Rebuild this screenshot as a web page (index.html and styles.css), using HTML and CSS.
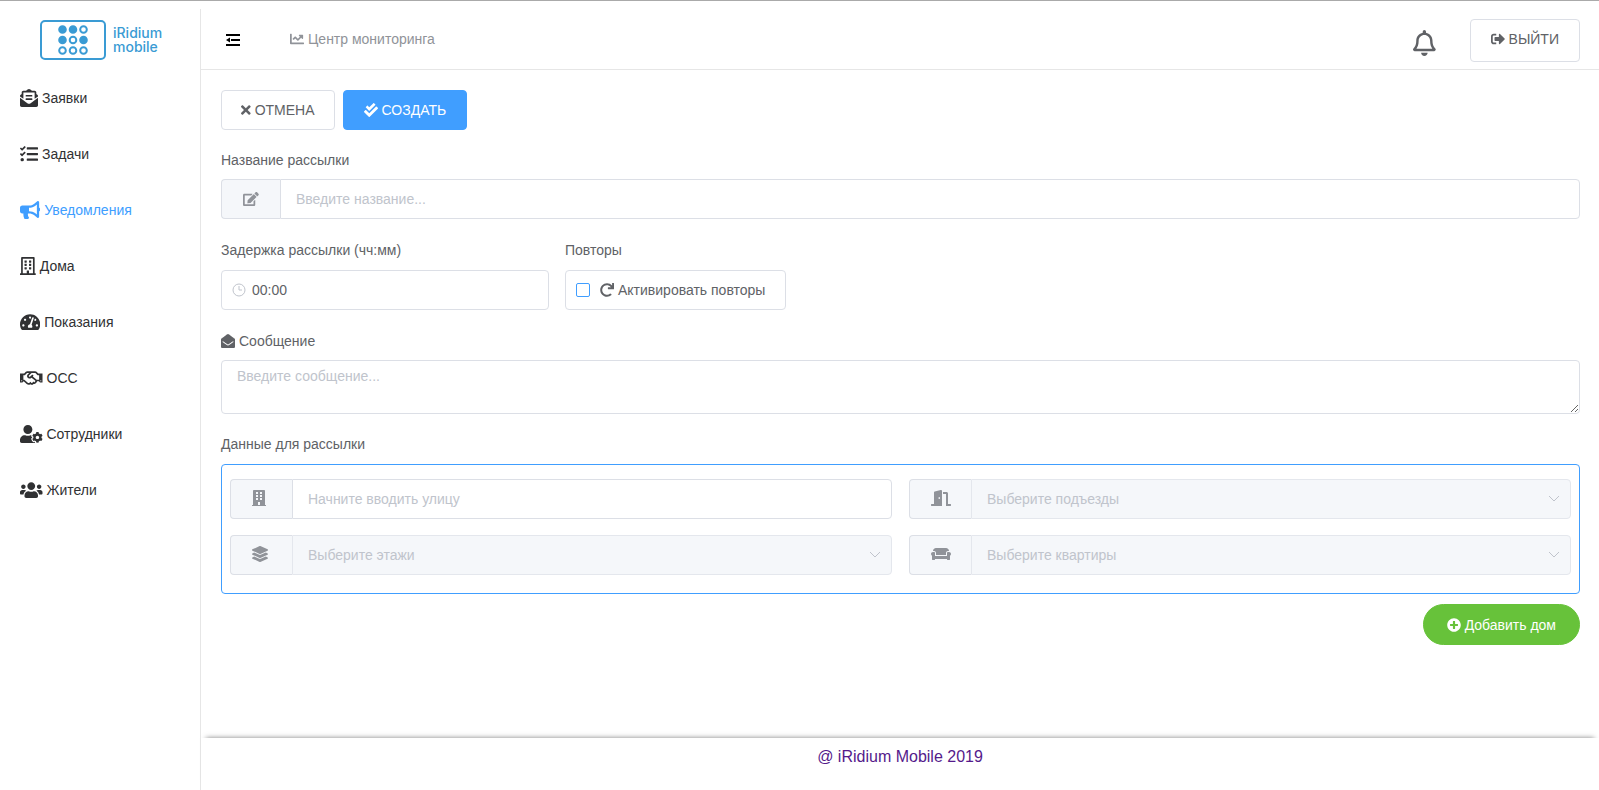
FILE: index.html
```
<!DOCTYPE html>
<html lang="ru">
<head>
<meta charset="utf-8">
<title>iRidium mobile</title>
<link rel="stylesheet" href="styles.css">
</head>
<body>
<div class="app">
  <aside class="sidebar">
    <a class="logo" href="#">
      <svg class="logo-mark" viewBox="0 0 66 40" aria-hidden="true">
        <rect x="1" y="1" width="64" height="38" rx="4"/>
        <g class="dot-on"><circle cx="22.5" cy="9.5" r="3.3"/><circle cx="33" cy="9.5" r="3.3"/><circle cx="22.5" cy="20" r="3.3"/><circle cx="43.5" cy="20" r="3.3"/></g>
        <circle cx="43.5" cy="9.5" r="3.3"/><circle cx="33" cy="20" r="3.3"/><circle cx="22.5" cy="30.5" r="3.3"/><circle cx="33" cy="30.5" r="3.3"/><circle cx="43.5" cy="30.5" r="3.3"/>
      </svg>
      <span class="logo-text">iRidium<br>mobile</span>
    </a>
    <nav class="menu">
      <a class="menu-item" href="#"><svg class="icon icon-md" viewBox="0 0 512 512"><path d="M176 216h160c8.84 0 16-7.16 16-16v-16c0-8.84-7.16-16-16-16H176c-8.84 0-16 7.16-16 16v16c0 8.84 7.16 16 16 16zm-16 80c0 8.84 7.16 16 16 16h160c8.84 0 16-7.16 16-16v-16c0-8.84-7.16-16-16-16H176c-8.84 0-16 7.16-16 16v16zm96 121.13c-16.42 0-32.84-5.06-46.86-15.19L0 250.86V464c0 26.51 21.49 48 48 48h416c26.51 0 48-21.49 48-48V250.86L302.86 401.94c-14.02 10.12-30.44 15.19-46.86 15.19zm237.61-254.18c-8.85-6.94-17.24-13.47-29.61-22.81V96c0-26.51-21.49-48-48-48h-77.55c-3.04-2.2-5.87-4.26-9.04-6.56C312.6 29.17 279.2-.35 256 0c-23.2-.35-56.59 29.17-73.41 41.44-3.17 2.3-6 4.36-9.04 6.56H96c-26.51 0-48 21.49-48 48v44.14c-12.37 9.33-20.76 15.87-29.61 22.81A47.995 47.995 0 0 0 0 200.72v10.65l96 69.35V96h320v184.72l96-69.35v-10.65c0-14.74-6.78-28.67-18.39-37.77z"/></svg><span>Заявки</span></a>
      <a class="menu-item" href="#"><svg class="icon icon-md" viewBox="0 0 512 512"><path d="M139.61 35.5a12 12 0 0 0-17 0L58.93 98.81l-22.7-22.12a12 12 0 0 0-17 0L3.53 92.41a12 12 0 0 0 0 17l47.59 47.4a12.78 12.78 0 0 0 17.61 0l15.59-15.62L156.52 69a12.09 12.09 0 0 0 .09-17zm0 159.19a12 12 0 0 0-17 0l-63.68 63.72-22.7-22.1a12 12 0 0 0-17 0L3.53 252a12 12 0 0 0 0 17L51 316.5a12.77 12.77 0 0 0 17.6 0l15.7-15.69 72.2-72.22a12 12 0 0 0 .09-16.9zM64 368c-26.49 0-48.59 21.5-48.59 48S37.53 464 64 464a48 48 0 0 0 0-96zm432 16H208a16 16 0 0 0-16 16v32a16 16 0 0 0 16 16h288a16 16 0 0 0 16-16v-32a16 16 0 0 0-16-16zm0-320H208a16 16 0 0 0-16 16v32a16 16 0 0 0 16 16h288a16 16 0 0 0 16-16V80a16 16 0 0 0-16-16zm0 160H208a16 16 0 0 0-16 16v32a16 16 0 0 0 16 16h288a16 16 0 0 0 16-16v-32a16 16 0 0 0-16-16z"/></svg><span>Задачи</span></a>
      <a class="menu-item active" href="#"><svg class="icon icon-md" viewBox="0 0 576 512"><path d="M576 240c0-23.63-12.95-44.04-32-55.12V32.01C544 23.26 537.02 0 512 0c-7.12 0-14.19 2.38-19.98 7.02l-85.03 68.03C364.28 109.19 310.66 128 256 128H64c-35.35 0-64 28.65-64 64v96c0 35.35 28.65 64 64 64h33.7c-1.39 10.48-2.18 21.14-2.18 32 0 39.77 9.26 77.35 25.56 110.94 5.19 10.69 16.52 17.06 28.4 17.06h74.28c26.05 0 41.69-29.84 25.9-50.56-16.4-21.52-26.15-48.36-26.15-77.44 0-11.11 1.62-21.79 4.41-32H256c54.66 0 108.28 18.81 150.98 52.95l85.03 68.03a32.023 32.023 0 0 0 19.98 7.02c24.92 0 32-22.78 32-32V295.13C563.05 284.04 576 263.63 576 240zm-96 141.42l-33.05-26.44C392.95 311.78 325.12 288 256 288v-96c69.12 0 136.95-23.78 190.95-66.98L480 98.58v282.84z"/></svg><span>Уведомления</span></a>
      <a class="menu-item" href="#"><svg class="icon icon-md" viewBox="0 0 448 512"><path d="M128 148v-40c0-6.6 5.4-12 12-12h40c6.6 0 12 5.4 12 12v40c0 6.6-5.4 12-12 12h-40c-6.6 0-12-5.4-12-12zm140 12h40c6.6 0 12-5.4 12-12v-40c0-6.6-5.4-12-12-12h-40c-6.6 0-12 5.4-12 12v40c0 6.6 5.4 12 12 12zm-128 96h40c6.6 0 12-5.4 12-12v-40c0-6.6-5.4-12-12-12h-40c-6.6 0-12 5.4-12 12v40c0 6.6 5.4 12 12 12zm128 0h40c6.6 0 12-5.4 12-12v-40c0-6.6-5.4-12-12-12h-40c-6.6 0-12 5.4-12 12v40c0 6.6 5.4 12 12 12zm-76 84v-40c0-6.6-5.4-12-12-12h-40c-6.6 0-12 5.4-12 12v40c0 6.6 5.4 12 12 12h40c6.6 0 12-5.4 12-12zm76 12h40c6.6 0 12-5.4 12-12v-40c0-6.6-5.4-12-12-12h-40c-6.6 0-12 5.4-12 12v40c0 6.6 5.4 12 12 12zm180 124v36H0v-36c0-6.6 5.4-12 12-12h19.5V24c0-13.3 10.7-24 24-24h337c13.3 0 24 10.7 24 24v440H436c6.6 0 12 5.4 12 12zM79.5 463H192v-67c0-6.6 5.4-12 12-12h40c6.6 0 12 5.4 12 12v67h112.5V49L80 48z"/></svg><span>Дома</span></a>
      <a class="menu-item" href="#"><svg class="icon icon-md" viewBox="0 0 576 512"><path d="M288 32C128.94 32 0 160.94 0 320c0 52.8 14.25 102.26 39.06 144.8 5.61 9.62 16.3 15.2 27.44 15.2h443c11.14 0 21.83-5.58 27.44-15.2C561.75 422.26 576 372.8 576 320c0-159.06-128.94-288-288-288zm0 64c14.71 0 26.58 10.13 30.32 23.65-1.11 2.26-2.64 4.23-3.45 6.67l-9.22 27.67c-5.13 3.49-10.97 6.01-17.64 6.01-17.67 0-32-14.33-32-32S270.33 96 288 96zM96 384c-17.67 0-32-14.33-32-32s14.33-32 32-32 32 14.33 32 32-14.33 32-32 32zm48-160c-17.67 0-32-14.33-32-32s14.33-32 32-32 32 14.33 32 32-14.33 32-32 32zm246.77-72.41l-61.33 184C343.13 347.33 352 364.54 352 384c0 11.72-3.38 22.55-8.88 32H232.88c-5.5-9.45-8.88-20.28-8.88-32 0-33.94 26.5-61.43 59.9-63.59l61.34-184.01c4.17-12.56 17.73-19.45 30.36-15.17 12.57 4.19 19.35 17.79 15.17 30.36zm14.66 57.2l15.52-46.55c3.47-1.29 7.13-2.23 11.05-2.23 17.67 0 32 14.33 32 32s-14.33 32-32 32c-11.38-.01-20.89-6.28-26.57-15.22zM480 384c-17.67 0-32-14.33-32-32s14.33-32 32-32 32 14.33 32 32-14.33 32-32 32z"/></svg><span>Показания</span></a>
      <a class="menu-item" href="#"><svg class="icon icon-md" viewBox="0 0 640 512"><path d="M519.2 127.9l-47.6-47.6A56.252 56.252 0 0 0 432 64H205.2c-14.8 0-29.1 5.9-39.6 16.3L118 127.9H0v255.7h64c17.6 0 31.8-14.2 31.9-31.7h9.1l84.6 76.4c30.9 25.1 73.8 25.7 105.6 3.8 12.5 10.8 26 15.9 41.1 15.9 18.2 0 35.3-7.4 48.8-24 22.1 8.7 48.2 2.6 64-16.8l26.2-32.3c5.6-6.9 9.1-14.8 10.9-23h57.9c.1 17.5 14.4 31.7 31.9 31.7h64V127.9H519.2zM48 351.6c-8.8 0-16-7.2-16-16s7.2-16 16-16 16 7.2 16 16c0 8.9-7.2 16-16 16zm390-6.9l-26.1 32.2c-2.8 3.4-7.8 4-11.3 1.2l-23.9-19.4-30 36.5c-6 7.3-15 4.8-18 2.4l-36.8-31.5-15.6 19.2c-13.9 17.1-39.2 19.7-55.3 6.6l-97.3-88H96V175.8h41.9l61.7-61.6c2-.8 3.7-1.5 5.7-2.3H262l-38.7 35.5c-29.4 26.9-31.1 72.3-4.4 101.3 14.8 16.2 61.2 41.2 101.5 4.4l8.2-7.5 108.2 87.8c3.4 2.8 3.9 7.9 1.2 11.3zm106-40.8h-69.2c-2.3-2.8-4.9-5.4-7.7-7.7l-102.7-83.4 12.5-11.4c6.5-6 7-16.1 1-22.6L367 167.1c-6-6.5-16.1-6.9-22.6-1l-55.2 50.6c-9.5 8.7-25.7 9.4-34.6 0-9.3-9.9-8.5-25.1 1.2-33.9l65.6-60.1c7.4-6.8 17-10.5 27-10.5l83.7-.2c2.1 0 4.1.8 5.5 2.3l61.7 61.6H544v128zm48 47.7c-8.8 0-16-7.2-16-16s7.2-16 16-16 16 7.2 16 16c0 8.9-7.2 16-16 16z"/></svg><span>ОСС</span></a>
      <a class="menu-item" href="#"><svg class="icon icon-md" viewBox="0 0 640 512"><path d="M610.5 373.3c2.6-14.1 2.6-28.5 0-42.6l25.8-14.9c3-1.7 4.3-5.2 3.3-8.5-6.7-21.6-18.2-41.2-33.2-57.4-2.3-2.5-6-3.1-9-1.4l-25.8 14.9c-10.9-9.3-23.4-16.5-36.9-21.3v-29.8c0-3.4-2.4-6.4-5.7-7.1-22.3-5-45-4.8-66.2 0-3.3.7-5.7 3.7-5.7 7.1v29.8c-13.5 4.8-26 12-36.9 21.3l-25.8-14.9c-2.9-1.7-6.7-1.1-9 1.4-15 16.2-26.5 35.8-33.2 57.4-1 3.3.4 6.8 3.3 8.5l25.8 14.9c-2.6 14.1-2.6 28.5 0 42.6l-25.8 14.9c-3 1.7-4.3 5.2-3.3 8.5 6.7 21.6 18.2 41.1 33.2 57.4 2.3 2.5 6 3.1 9 1.4l25.8-14.9c10.9 9.3 23.4 16.5 36.9 21.3v29.8c0 3.4 2.4 6.4 5.7 7.1 22.3 5 45 4.8 66.2 0 3.3-.7 5.7-3.7 5.7-7.1v-29.8c13.5-4.8 26-12 36.9-21.3l25.8 14.9c2.9 1.7 6.7 1.1 9-1.4 15-16.2 26.5-35.8 33.2-57.4 1-3.3-.4-6.8-3.3-8.5l-25.8-14.9zM496 400.5c-26.8 0-48.5-21.8-48.5-48.5s21.8-48.5 48.5-48.5 48.5 21.8 48.5 48.5-21.7 48.5-48.5 48.5zM224 256c70.7 0 128-57.3 128-128S294.7 0 224 0 96 57.3 96 128s57.3 128 128 128zm201.2 226.5c-2.3-1.2-4.6-2.6-6.8-3.9l-7.9 4.6c-6 3.4-12.8 5.3-19.6 5.3-10.9 0-21.4-4.6-28.9-12.6-18.3-19.8-32.3-43.9-40.2-69.6-5.5-17.7 1.9-36.4 17.9-45.7l7.9-4.6c-.1-2.6-.1-5.2 0-7.8l-7.9-4.6c-16-9.2-23.4-28-17.9-45.7.9-2.9 2.2-5.8 3.2-8.7-3.8-.3-7.5-1.2-11.4-1.2h-16.7c-22.2 10.2-46.9 16-72.9 16s-50.6-5.8-72.9-16h-16.7C60.2 288 0 348.2 0 422.4V464c0 26.5 21.5 48 48 48h352c10.1 0 19.5-3.2 27.2-8.5-1.2-3.8-2-7.7-2-11.8v-9.2z"/></svg><span>Сотрудники</span></a>
      <a class="menu-item" href="#"><svg class="icon icon-md" viewBox="0 0 640 512"><path d="M96 224c35.3 0 64-28.7 64-64s-28.7-64-64-64-64 28.7-64 64 28.7 64 64 64zm448 0c35.3 0 64-28.7 64-64s-28.7-64-64-64-64 28.7-64 64 28.7 64 64 64zm32 32h-64c-17.6 0-33.5 7.1-45.1 18.6 40.3 22.1 68.9 62 75.1 109.4h66c17.7 0 32-14.3 32-32v-32c0-35.3-28.7-64-64-64zm-256 0c61.9 0 112-50.1 112-112S381.9 32 320 32 208 82.1 208 144s50.1 112 112 112zm76.8 32h-8.3c-20.8 10-43.9 16-68.5 16s-47.6-6-68.5-16h-8.3C179.6 288 128 339.6 128 403.2V432c0 26.5 21.5 48 48 48h288c26.5 0 48-21.5 48-48v-28.8c0-63.6-51.6-115.2-115.2-115.2zm-223.7-13.4C161.5 263.1 145.6 256 128 256H64c-35.3 0-64 28.7-64 64v32c0 17.7 14.3 32 32 32h65.9c6.3-47.4 34.9-87.3 75.2-109.4z"/></svg><span>Жители</span></a>
    </nav>
  </aside>

  <div class="page">
    <header class="topbar">
      <button class="bare toggle" type="button" aria-label="Свернуть меню"><svg class="icon icon-sm" viewBox="0 0 14 14"><path d="M0 1h14v2H0zM5 6h9v2H5zM0 11h14v2H0zM0 7l4-2.500v5z"/></svg></button>
      <a class="monitor" href="#"><svg class="icon icon-sm" viewBox="0 0 512 512"><path d="M496 384H64V80c0-8.840-7.160-16-16-16H16C7.160 64 0 71.160 0 80v336c0 17.670 14.330 32 32 32h464c8.840 0 16-7.160 16-16v-32c0-8.840-7.160-16-16-16zM464 96H345.940c-21.380 0-32.090 25.850-16.970 40.970l32.400 32.400L288 242.750l-73.370-73.370c-12.500-12.500-32.760-12.500-45.250 0l-68.690 68.690c-6.250 6.250-6.250 16.380 0 22.630l22.620 22.620c6.250 6.250 16.380 6.250 22.630 0L192 237.250l73.370 73.370c12.500 12.500 32.760 12.500 45.250 0l96-96 32.400 32.400c15.120 15.120 40.970 4.410 40.970-16.970V112c.01-8.840-7.150-16-15.990-16z"/></svg><span>Центр мониторинга</span></a>
      <button class="bare bell" type="button" aria-label="Оповещения"><svg class="icon icon-lg" viewBox="0 0 448 512"><path d="M439.390 362.290c-19.320-20.760-55.470-51.990-55.470-154.290 0-77.700-54.480-139.900-127.940-155.160V32c0-17.670-14.320-32-31.980-32s-31.980 14.330-31.980 32v20.840C118.560 68.100 64.080 130.300 64.080 208c0 102.300-36.150 133.530-55.470 154.290-6 6.450-8.660 14.160-8.610 21.710.11 16.400 12.980 32 32.100 32h383.800c19.120 0 32-15.600 32.100-32 .05-7.550-2.610-15.270-8.610-21.710zM67.530 368c21.220-27.970 44.420-74.330 44.530-159.420 0-.2-.06-.38-.06-.58 0-61.860 50.140-112 112-112s112 50.140 112 112c0 .2-.06.38-.06.58.11 85.100 23.310 131.460 44.530 159.420H67.530zM224 512c35.320 0 63.970-28.650 63.970-64H160.030c0 35.350 28.650 64 63.970 64z"/></svg></button>
      <button class="btn btn-exit" type="button"><svg class="icon icon-sm" viewBox="0 0 512 512"><path d="M497 273L329 441c-15 15-41 4.500-41-17v-96H152c-13.300 0-24-10.700-24-24v-96c0-13.300 10.700-24 24-24h136V88c0-21.400 25.900-32 41-17l168 168c9.300 9.400 9.300 24.600 0 34zM192 436v-40c0-6.600-5.400-12-12-12H96c-17.700 0-32-14.300-32-32V160c0-17.700 14.300-32 32-32h84c6.600 0 12-5.400 12-12V76c0-6.600-5.400-12-12-12H96c-53 0-96 43-96 96v192c0 53 43 96 96 96h84c6.600 0 12-5.400 12-12z"/></svg><span>ВЫЙТИ</span></button>
    </header>

    <main class="content">
      <form class="form">
        <div class="actions">
          <button class="btn" type="button"><svg class="icon icon-sm" viewBox="0 0 352 512"><path d="M242.720 256l100.070-100.070c12.280-12.280 12.280-32.190 0-44.480l-22.240-22.240c-12.280-12.280-32.190-12.280-44.480 0L176 189.280 75.930 89.210c-12.280-12.280-32.190-12.280-44.480 0L9.210 111.450c-12.280 12.280-12.280 32.190 0 44.480L109.280 256 9.210 356.070c-12.280 12.280-12.280 32.190 0 44.480l22.240 22.240c12.280 12.280 32.200 12.280 44.480 0L176 322.720l100.070 100.070c12.280 12.280 32.200 12.280 44.480 0l22.240-22.240c12.280-12.280 12.280-32.190 0-44.480L242.720 256z"/></svg><span>ОТМЕНА</span></button>
          <button class="btn btn-primary" type="button"><svg class="icon icon-sm" viewBox="0 0 512 512"><path d="M505 174.800l-39.600-39.600c-9.400-9.400-24.600-9.400-33.900 0L192 374.700 80.600 263.200c-9.400-9.400-24.600-9.400-33.900 0L7 302.900c-9.400 9.400-9.400 24.600 0 34L175 505c9.400 9.400 24.600 9.400 33.900 0l296-296.200c9.400-9.500 9.400-24.700.1-34zm-324.300 106c6.200 6.300 16.400 6.300 22.600 0l208-208.200c6.200-6.300 6.200-16.400 0-22.600L366.100 4.700c-6.200-6.300-16.400-6.300-22.600 0L192 156.200l-55.400-55.500c-6.200-6.300-16.400-6.300-22.600 0L68.700 146c-6.200 6.300-6.200 16.400 0 22.600l112 112.200z"/></svg><span>СОЗДАТЬ</span></button>
        </div>

        <div class="field">
          <label class="label" for="title">Название рассылки</label>
          <div class="group">
            <span class="prepend prepend-title"><svg class="icon icon-sm" viewBox="0 0 576 512"><path d="M402.600 83.200l90.200 90.200c3.800 3.800 3.800 10 0 13.800L274.400 405.600l-92.800 10.300c-12.400 1.400-22.900-9.100-21.500-21.500l10.300-92.800L388.800 83.200c3.800-3.800 10-3.800 13.800 0zm162-22.900l-48.800-48.800c-15.200-15.200-39.900-15.200-55.200 0l-35.400 35.400c-3.800 3.800-3.800 10 0 13.800l90.200 90.200c3.800 3.800 10 3.800 13.800 0l35.400-35.400c15.200-15.300 15.200-40 0-55.200zM384 346.200V448H64V128h229.800c3.200 0 6.200-1.300 8.500-3.500l40-40c7.600-7.600 2.200-20.500-8.500-20.500H48C21.500 64 0 85.500 0 112v352c0 26.500 21.500 48 48 48h352c26.500 0 48-21.500 48-48V306.200c0-10.700-12.900-16-20.500-8.500l-40 40c-2.200 2.300-3.500 5.300-3.500 8.500z"/></svg></span>
            <input class="control" id="title" type="text" placeholder="Введите название...">
          </div>
        </div>

        <div class="pair">
          <div class="field delay">
            <label class="label" for="delay">Задержка рассылки (чч:мм)</label>
            <div class="time">
              <svg class="clock" viewBox="0 0 14 14"><circle cx="7" cy="7" r="6"/><path d="M7 3v4h3"/></svg>
              <input class="control" id="delay" type="text" value="00:00">
            </div>
          </div>
          <div class="field">
            <span class="label">Повторы</span>
            <label class="repeat"><input class="check" type="checkbox"><svg class="icon icon-sm" viewBox="0 0 512 512"><path d="M500.330 0h-47.410a12 12 0 0 0-12 12.570l4 82.760A247.420 247.420 0 0 0 256 8C119.340 8 7.900 119.530 8 256.190 8.100 393.070 119.100 504 256 504a247.100 247.100 0 0 0 166.180-63.910 12 12 0 0 0 .48-17.430l-34-34a12 12 0 0 0-16.380-.55A176 176 0 1 1 402.100 157.800l-101.530-4.870a12 12 0 0 0-12.570 12v47.410a12 12 0 0 0 12 12h200.330a12 12 0 0 0 12-12V12a12 12 0 0 0-12-12z"/></svg><span>Активировать повторы</span></label>
          </div>
        </div>

        <div class="field field-message">
          <label class="label" for="message"><svg class="icon icon-sm" viewBox="0 0 512 512"><path d="M512 464c0 26.510-21.490 48-48 48H48c-26.510 0-48-21.490-48-48V200.724a48 48 0 0 1 18.387-37.776c24.913-19.529 45.501-35.365 164.200-121.511C199.412 29.170 232.797-.347 256 .003c23.198-.354 56.596 29.172 73.413 41.433 118.687 86.137 139.303 101.995 164.200 121.512A48 48 0 0 1 512 200.724V464zm-65.666-196.605c-2.563-3.728-7.700-4.595-11.339-1.907-22.845 16.873-55.462 40.705-105.582 77.079-16.825 12.266-50.210 41.781-73.413 41.430-23.211.344-56.559-29.143-73.413-41.430-50.114-36.370-82.734-60.204-105.582-77.079-3.639-2.688-8.776-1.821-11.339 1.907l-9.072 13.196a7.998 7.998 0 0 0 1.839 10.967c22.887 16.899 55.454 40.690 105.303 76.868 20.274 14.781 56.524 47.813 92.264 47.573 35.724.242 71.961-32.771 92.263-47.573 49.850-36.179 82.418-59.970 105.303-76.868a7.998 7.998 0 0 0 1.839-10.967l-9.071-13.196z"/></svg><span>Сообщение</span></label>
          <textarea class="control message" id="message" placeholder="Введите сообщение..."></textarea>
        </div>

        <div class="field field-last">
          <span class="label">Данные для рассылки</span>
          <div class="house">
            <div class="group">
              <span class="prepend"><svg class="icon icon-base" viewBox="0 0 448 512"><path fill-rule="evenodd" d="M436 480h-20V24c0-13-11-24-24-24H56C43 0 32 11 32 24v456H12c-7 0-12 5-12 12v20h448v-20c0-7-5-12-12-12zM128 64h64v64h-64zM256 64h64v64h-64zM128 160h64v64h-64zM256 160h64v64h-64zM128 256h64v64h-64zM256 256h64v64h-64zM192 384h64v96h-64z"/></svg></span>
              <input class="control" type="text" aria-label="Улица" placeholder="Начните вводить улицу">
            </div>
            <div class="group">
              <span class="prepend"><svg class="icon icon-base" viewBox="0 0 640 512"><path d="M624 448h-80V113.450C544 86.190 522.470 64 496 64H384v64h96v384h144c8.840 0 16-7.160 16-16v-32c0-8.840-7.160-16-16-16zM312.240 1.010l-192 49.740C105.990 54.440 96 67.700 96 82.920V448H16c-8.840 0-16 7.160-16 16v32c0 8.840 7.160 16 16 16h336V33.180c0-21.580-19.560-37.410-39.760-32.170zM264 288c-13.250 0-24-14.330-24-32s10.750-32 24-32 24 14.330 24 32-10.750 32-24 32z"/></svg></span>
              <span class="pick"><select class="control" aria-label="Подъезды" disabled><option>Выберите подъезды</option></select><svg class="chevron" viewBox="0 0 12 8"><path d="M1 1l5 5 5-5"/></svg></span>
            </div>
            <div class="group">
              <span class="prepend"><svg class="icon icon-base" viewBox="0 0 512 512"><path d="M12.410 148.020l232.940 105.670c6.800 3.090 14.490 3.090 21.290 0l232.940-105.670c16.550-7.510 16.550-32.520 0-40.030L266.650 2.310a25.607 25.607 0 0 0-21.290 0L12.410 107.980c-16.550 7.510-16.550 32.530 0 40.040zm487.180 88.280l-58.090-26.330-161.640 73.270c-7.560 3.430-15.590 5.170-23.860 5.170s-16.290-1.740-23.860-5.170L70.510 209.970l-58.100 26.330c-16.550 7.500-16.550 32.500 0 40l232.940 105.590c6.800 3.080 14.490 3.080 21.290 0L499.590 276.300c16.550-7.500 16.550-32.500 0-40zm0 127.800l-57.870-26.230-161.860 73.370c-7.560 3.430-15.590 5.170-23.860 5.170s-16.290-1.740-23.860-5.170L70.290 337.870 12.410 364.100c-16.550 7.500-16.550 32.500 0 40l232.940 105.590c6.800 3.080 14.490 3.080 21.290 0L499.590 404.100c16.550-7.500 16.550-32.500 0-40z"/></svg></span>
              <span class="pick"><select class="control" aria-label="Этажи" disabled><option>Выберите этажи</option></select><svg class="chevron" viewBox="0 0 12 8"><path d="M1 1l5 5 5-5"/></svg></span>
            </div>
            <div class="group">
              <span class="prepend"><svg class="icon icon-base" viewBox="0 0 640 512"><path d="M160 224v64h320v-64c0-35.300 28.700-64 64-64h32c0-53-43-96-96-96H160c-53 0-96 43-96 96h32c35.300 0 64 28.700 64 64zm416-32h-32c-17.700 0-32 14.300-32 32v96H128v-96c0-17.700-14.300-32-32-32H64c-35.300 0-64 28.700-64 64 0 23.600 13 44 32 55.100V432c0 8.800 7.200 16 16 16h64c8.800 0 16-7.200 16-16v-16h384v16c0 8.800 7.200 16 16 16h64c8.800 0 16-7.200 16-16V311.100c19-11.100 32-31.500 32-55.100 0-35.300-28.700-64-64-64z"/></svg></span>
              <span class="pick"><select class="control" aria-label="Квартиры" disabled><option>Выберите квартиры</option></select><svg class="chevron" viewBox="0 0 12 8"><path d="M1 1l5 5 5-5"/></svg></span>
            </div>
          </div>
        </div>

        <button class="btn btn-add" type="button"><svg class="icon icon-sm" viewBox="0 0 512 512"><path d="M256 8C119 8 8 119 8 256s111 248 248 248 248-111 248-248S393 8 256 8zm144 276c0 6.600-5.400 12-12 12h-92v92c0 6.600-5.400 12-12 12h-56c-6.600 0-12-5.400-12-12v-92h-92c-6.600 0-12-5.400-12-12v-56c0-6.600 5.400-12 12-12h92v-92c0-6.600 5.400-12 12-12h56c6.600 0 12 5.400 12 12v92h92c6.600 0 12 5.400 12 12v56z"/></svg><span>Добавить дом</span></button>
      </form>
    </main>

    <footer class="footer"><a class="footer-link" href="#">@ iRidium Mobile 2019</a></footer>
  </div>
</div>
</body>
</html>
```
FILE: styles.css
```
* { box-sizing: border-box; }

body {
  margin: 0;
  color: #606266;
  background: #fff;
  font-family: "Liberation Sans", Arial, sans-serif;
  font-size: 14px;
  line-height: 20px;
}

button, input, select, textarea { font: inherit; color: inherit; }
a { color: inherit; text-decoration: none; }

.app {
  display: flex;
  min-height: 100vh;
  padding-top: 8px;
  border-top: 1px solid #aaa;
}

.icon { display: block; flex: none; width: auto; fill: currentColor; }
.icon-sm { height: 14px; }
.icon-base { height: 16px; }
.icon-md { height: 18px; }
.icon-lg { height: 26px; }

/* Sidebar */
.sidebar {
  flex: none;
  width: 201px;
  border-right: 1px solid #e6e6e6;
}

.logo {
  display: flex;
  align-items: center;
  gap: 7px;
  height: 61px;
  padding-left: 40px;
  color: #3a9bd4;
}

.logo-mark {
  width: 66px;
  height: 40px;
  fill: none;
  stroke: currentColor;
  stroke-width: 2;
}

.dot-on { fill: currentColor; }

.logo-text {
  font-family: Inter, "Open Sans", sans-serif;
  font-size: 14px;
  font-weight: 500;
  line-height: 14px;
}

.menu-item {
  display: flex;
  align-items: center;
  gap: 4px;
  height: 56px;
  padding-left: 20px;
  color: #303133;
}

.menu-item.active { color: #409eff; }

/* Header */
.page {
  display: flex;
  flex: 1;
  flex-direction: column;
  min-width: 0;
}

.topbar {
  display: flex;
  align-items: center;
  height: 61px;
  padding: 0 19px 0 25px;
  border-bottom: 1px solid #e6e6e6;
}

.bare {
  padding: 0;
  border: 0;
  background: none;
  cursor: pointer;
}

.toggle { margin-top: 2px; color: #000; }

.monitor {
  display: flex;
  align-items: center;
  gap: 4px;
  margin-left: 50px;
  color: #909399;
}

.bell { margin: 8px 34px 0 auto; }

.btn {
  display: inline-flex;
  align-items: center;
  gap: 4px;
  height: 40px;
  padding: 0 19px;
  border: 1px solid #dcdfe6;
  border-radius: 4px;
  background: #fff;
  cursor: pointer;
}

.btn-exit { height: 43px; margin-top: 2px; padding: 0 20px 2px; }

.btn-primary {
  padding: 0 20px;
  color: #fff;
  border-color: #409eff;
  background: #409eff;
}

/* Form */
.content {
  flex: 1;
  padding: 20px 19px 20px 20px;
}

.form {
  display: flex;
  flex-direction: column;
}

.actions { display: flex; gap: 8px; margin-bottom: 20px; }

.field {
  display: flex;
  flex-direction: column;
  gap: 9px;
  margin-bottom: 21px;
}

.field-message { margin-bottom: 20px; }
.field-last { gap: 10px; margin-bottom: 10px; }

.label { display: flex; align-items: center; gap: 4px; }

.control {
  display: block;
  flex: 1;
  width: 100%;
  min-width: 0;
  height: 40px;
  padding: 0 15px;
  border: 1px solid #dcdfe6;
  border-radius: 4px;
  outline: none;
  background: #fff;
}

.control::placeholder { color: #c0c4cc; opacity: 1; }

.group { display: flex; min-width: 0; }

.group .control {
  border-top-left-radius: 0;
  border-bottom-left-radius: 0;
}

.prepend {
  display: flex;
  flex: none;
  align-items: center;
  width: 62px;
  padding-left: 21px;
  padding-bottom: 2px;
  border: 1px solid #dcdfe6;
  border-right: 0;
  border-radius: 4px 0 0 4px;
  color: #909399;
  background: #f5f7fa;
}

.prepend-title { width: 59px; padding-bottom: 0; }

.pair { display: flex; gap: 16px; }

.delay { width: 328px; }

.pair .field { gap: 10px; }

.time { position: relative; }
.time .control { padding-left: 30px; }

.clock {
  position: absolute;
  top: 13px;
  left: 11px;
  width: 14px;
  height: 14px;
  fill: none;
  stroke: #c0c4cc;
}

.repeat {
  display: flex;
  align-items: center;
  gap: 4px;
  height: 40px;
  padding: 0 20px 0 10px;
  border: 1px solid #dcdfe6;
  border-radius: 4px;
}

.check {
  width: 14px;
  height: 14px;
  margin: 0 6px 0 0;
  border: 1px solid #409eff;
  border-radius: 2px;
  background: #fff;
  appearance: none;
}

.check:checked { background: #409eff; }

.message {
  flex: none;
  height: 54px;
  padding: 5px 15px;
  resize: vertical;
}

.house {
  display: grid;
  grid-template-columns: 1fr 1fr;
  gap: 16px 17px;
  padding: 14px 8px 18px;
  border: 1px solid #409eff;
  border-radius: 4px;
}

.pick { position: relative; display: flex; flex: 1; min-width: 0; }

.pick .control {
  border-color: #e4e7ed;
  color: #c0c4cc;
  background: #f5f7fa;
  opacity: 1;
  appearance: none;
}

.chevron {
  position: absolute;
  top: 16px;
  right: 11px;
  width: 12px;
  height: 8px;
  fill: none;
  stroke: #c0c4cc;
  pointer-events: none;
}

.btn-add {
  align-self: flex-end;
  height: 41px;
  padding: 0 23px;
  border-color: #67c23a;
  border-radius: 21px;
  color: #fff;
  background: #67c23a;
}

/* Footer */
.footer {
  height: 52px;
  padding-top: 9px;
  text-align: center;
  font-size: 16px;
  box-shadow: 0 -5px 5px -5px rgba(0, 0, 0, 0.5);
}

.footer-link { color: #551a8b; }
```
